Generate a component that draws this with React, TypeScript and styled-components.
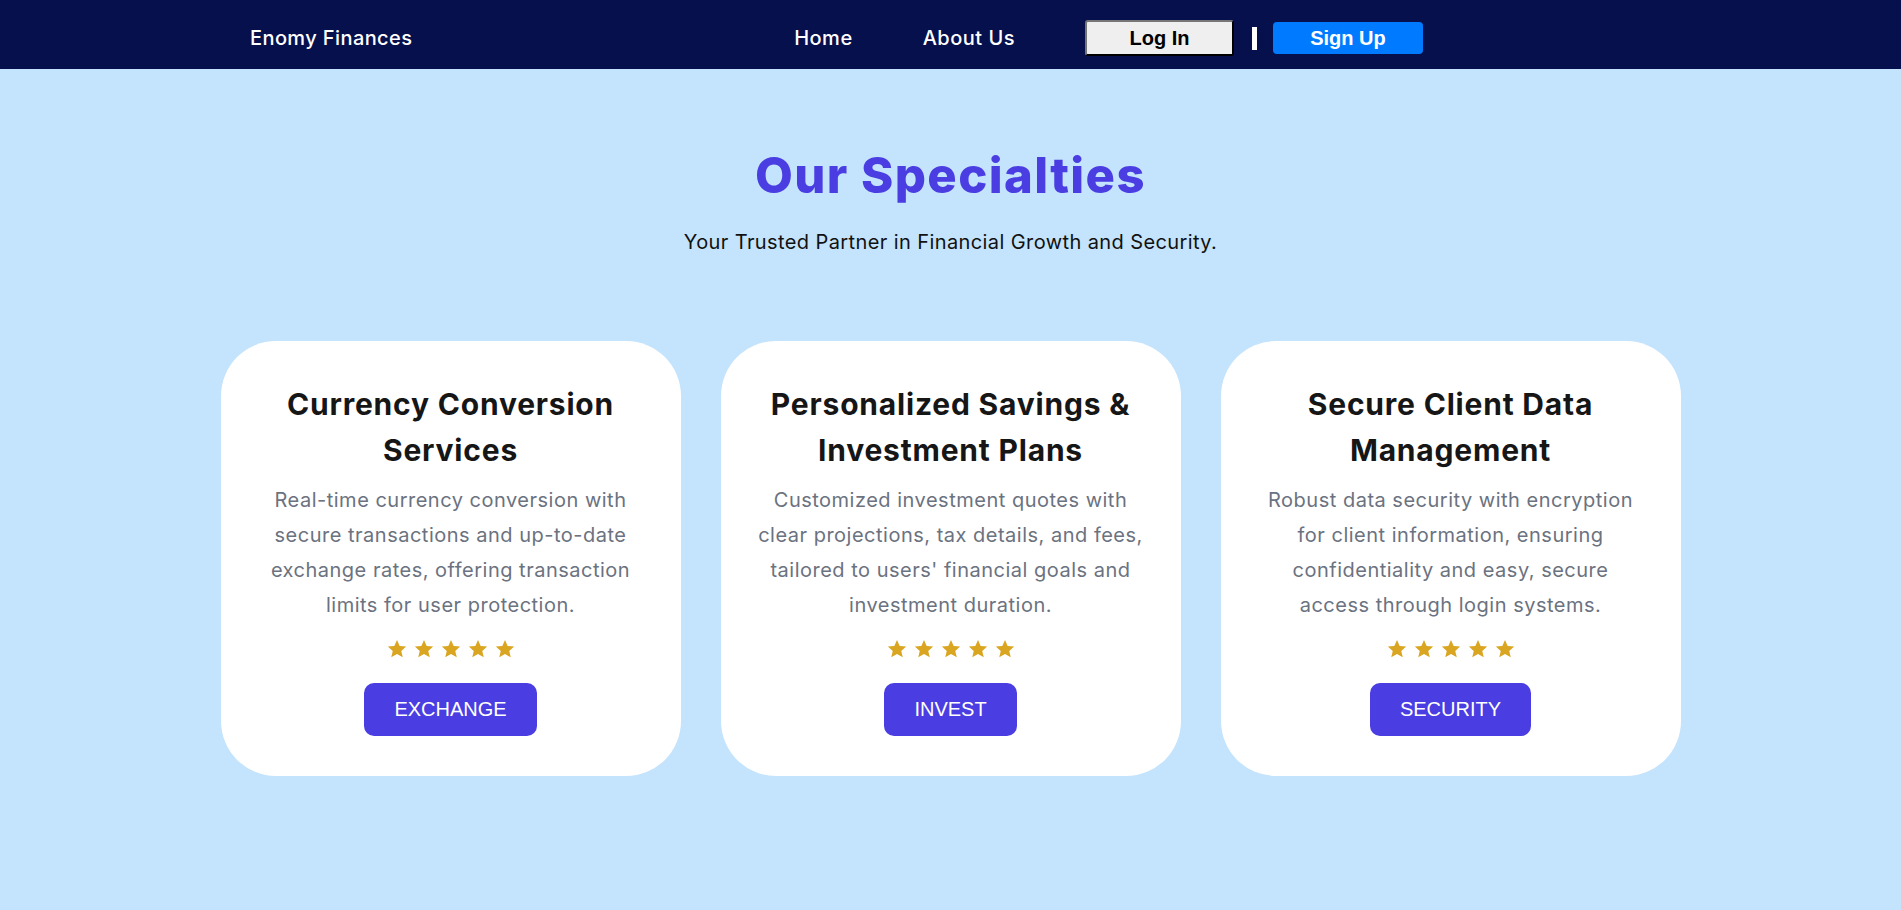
import React from "react";
import styled, { createGlobalStyle } from "styled-components";

const GlobalStyle = createGlobalStyle`
  * { box-sizing: border-box; }
  html, body { margin: 0; padding: 0; }
  body {
    background: #c4e3fd;
    font-family: Inter, "Open Sans", "Liberation Sans", sans-serif;
    min-height: 910px;
  }
`;

const Page = styled.div`
  min-height: 910px;
  background: #c4e3fd;
`;

const NavBar = styled.nav`
  height: 69px;
  background: #06104d;
  display: flex;
  align-items: center;
  padding: 7px 478px 0 250px;
`;

const Brand = styled.div`
  color: #ffffff;
  font-family: Inter, sans-serif;
  font-weight: 500;
  font-size: 20px;
  letter-spacing: 0.4px;
`;

const NavLinks = styled.div`
  margin-left: auto;
  display: flex;
  align-items: center;
  gap: 70px;
`;

const NavLink = styled.a`
  color: #ffffff;
  font-family: Inter, sans-serif;
  font-weight: 500;
  font-size: 20px;
  letter-spacing: 0.5px;
  text-decoration: none;
  cursor: pointer;
`;

const AuthGroup = styled.div`
  margin-left: 70px;
  display: flex;
  align-items: center;
`;

const LoginButton = styled.button`
  width: 149px;
  height: 36px;
  background: #efefef;
  border: 2px outset #767676;
  border-right-color: #111;
  border-bottom-color: #111;
  border-radius: 3px;
  font-family: "Liberation Sans", Arial, sans-serif;
  font-weight: 700;
  font-size: 20px;
  color: #000;
  padding: 0;
`;

const Divider = styled.span`
  display: block;
  width: 5px;
  height: 23px;
  background: #ffffff;
  margin: 0 16px 0 18px;
`;

const SignupButton = styled.button`
  width: 150px;
  height: 32px;
  background: #007bff;
  border: none;
  border-radius: 4px;
  font-family: "Liberation Sans", Arial, sans-serif;
  font-weight: 700;
  font-size: 20px;
  color: #ffffff;
  padding: 0;
`;

const Main = styled.main`
  padding-top: 78px;
  display: flex;
  flex-direction: column;
  align-items: center;
`;

const Heading = styled.h1`
  margin: 0;
  font-family: Inter, sans-serif;
  font-weight: 800;
  font-size: 49px;
  line-height: 58px;
  color: #4a3de2;
  letter-spacing: 1.4px;
`;

const Subtitle = styled.p`
  margin: 22px 0 0;
  font-family: Inter, sans-serif;
  font-size: 20px;
  line-height: 30px;
  letter-spacing: 0.4px;
  color: #111111;
`;

const CardRow = styled.div`
  margin-top: 84px;
  display: grid;
  grid-template-columns: repeat(3, 460px);
  gap: 40px;
`;

const Card = styled.div`
  background: #ffffff;
  border-radius: 55px;
  height: 435px;
  padding: 40px 30px;
  display: flex;
  flex-direction: column;
  align-items: center;
  text-align: center;
`;

const CardTitle = styled.h2`
  margin: 0;
  font-family: Inter, sans-serif;
  font-weight: 700;
  font-size: 30px;
  line-height: 46px;
  letter-spacing: 0.8px;
  color: #161616;
  white-space: pre-line;
`;

const CardText = styled.p`
  margin: 10px 0 0;
  font-family: Inter, sans-serif;
  font-size: 20px;
  line-height: 35px;
  letter-spacing: 0.5px;
  color: #6b7280;
  white-space: pre-line;
`;

const Stars = styled.div`
  margin-top: 16px;
  display: flex;
  gap: 7px;
  height: 20px;
  align-items: center;
`;

const ActionButton = styled.button`
  margin-top: 24px;
  background: #4a3de2;
  color: #ffffff;
  border: none;
  border-radius: 10px;
  height: 53px;
  padding: 0 30px;
  font-family: "Liberation Sans", Arial, sans-serif;
  font-size: 20px;
  cursor: pointer;
`;

const Star = () => (
  <svg width="20" height="20" viewBox="0 0 24 24">
    <path
      fill="#daa520"
      d="M12 1.2l3.2 7.2 7.8.7-5.9 5.2 1.8 7.7L12 17.9l-6.9 4.1 1.8-7.7L1 9.1l7.8-.7z"
    />
  </svg>
);

const cards = [
  {
    title: "Currency Conversion\nServices",
    text:
      "Real-time currency conversion with\nsecure transactions and up-to-date\nexchange rates, offering transaction\nlimits for user protection.",
    action: "EXCHANGE",
  },
  {
    title: "Personalized Savings &\nInvestment Plans",
    text:
      "Customized investment quotes with\nclear projections, tax details, and fees,\ntailored to users' financial goals and\ninvestment duration.",
    action: "INVEST",
  },
  {
    title: "Secure Client Data\nManagement",
    text:
      "Robust data security with encryption\nfor client information, ensuring\nconfidentiality and easy, secure\naccess through login systems.",
    action: "SECURITY",
  },
];

export default function App() {
  return (
    <Page>
      <GlobalStyle />
      <NavBar>
        <Brand>Enomy Finances</Brand>
        <NavLinks>
          <NavLink>Home</NavLink>
          <NavLink>About Us</NavLink>
        </NavLinks>
        <AuthGroup>
          <LoginButton>Log In</LoginButton>
          <Divider />
          <SignupButton>Sign Up</SignupButton>
        </AuthGroup>
      </NavBar>
      <Main>
        <Heading>Our Specialties</Heading>
        <Subtitle>Your Trusted Partner in Financial Growth and Security.</Subtitle>
        <CardRow>
          {cards.map((c) => (
            <Card key={c.action}>
              <CardTitle>{c.title}</CardTitle>
              <CardText>{c.text}</CardText>
              <Stars>
                {[0, 1, 2, 3, 4].map((i) => (
                  <Star key={i} />
                ))}
              </Stars>
              <ActionButton>{c.action}</ActionButton>
            </Card>
          ))}
        </CardRow>
      </Main>
    </Page>
  );
}
